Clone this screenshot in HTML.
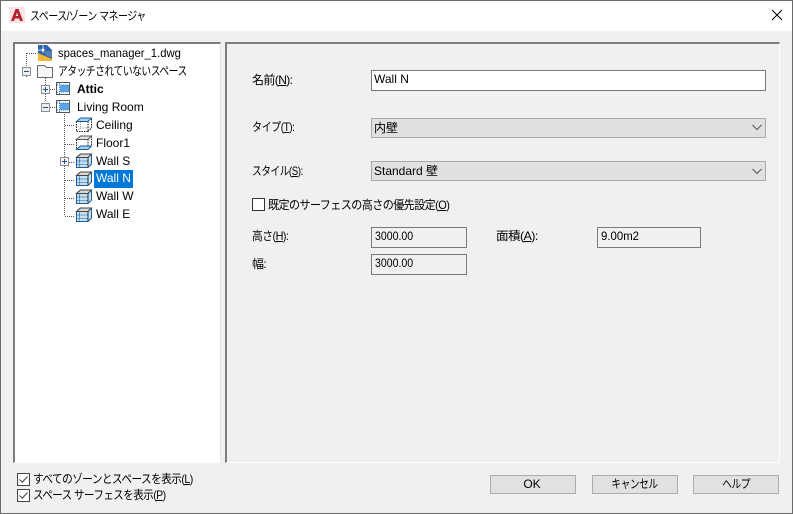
<!DOCTYPE html>
<html><head><meta charset="utf-8">
<style>
html,body{margin:0;padding:0;width:793px;height:514px;overflow:hidden;background:#f0f0f0}
body{position:relative;font-family:"Liberation Sans","Noto Sans CJK JP",sans-serif;font-size:12px;color:#000}
.a{position:absolute;white-space:nowrap;line-height:16px;transform-origin:left center}
.b{position:absolute;box-sizing:border-box}
.jp{letter-spacing:-.6px}
u{text-decoration:underline}
.combo{background:#e0e0e0;border:1px solid #a9a9a9;left:371px;width:395px;height:20px}
.ro{background:#f0f0f0;border:1px solid #7a7a7a;height:21px}
.btn{background:#e1e1e1;border:1px solid #adadad;height:19px;width:86px;top:475px;text-align:center;line-height:16px;font-size:12px}
.btn span{display:inline-block}
.t{font-size:12px;letter-spacing:0}
.chk{width:13px;height:13px;background:#fff;border:1px solid #333}
</style></head><body>
<div class="b" style="left:0;top:0;width:793px;height:514px;border:1px solid #6b6b6b;border-top-color:#6b6b6b"></div>
<div class="b" style="left:1px;top:1px;width:791px;height:30px;background:#fff"></div>
<svg class="b" style="left:9px;top:7px" width="16" height="16" viewBox="0 0 16 16"><rect width="16" height="16" fill="#f8e4e2"/><path d="M2 14 L6.5 2 H9.5 L14 14 H11 L10.2 11.5 H5.8 L5 14 Z M6.8 9 H9.2 L8 5.5 Z" fill="#b5222d" fill-rule="evenodd"/></svg>
<div class="a jp" style="left:30px;top:8px;transform:scaleX(.83)">スペース/ゾーン マネージャ</div>
<svg class="b" style="left:771px;top:9px" width="12" height="12" viewBox="0 0 12 12"><path d="M1 1 L11 11 M11 1 L1 11" stroke="#000" stroke-width="1" fill="none"/></svg>

<!-- left pane -->
<div class="b" style="left:13px;top:42px;width:208px;height:421px;background:#fff;border-top:2px solid #7d7d7d;border-left:2px solid #7d7d7d;border-right:1px solid #e4e4e4;border-bottom:1px solid #fff"></div>
<!-- right pane -->
<div class="b" style="left:225px;top:42px;width:555px;height:421px;background:#f0f0f0;border-top:2px solid #7d7d7d;border-left:2px solid #7d7d7d;border-right:1px solid #fff;border-bottom:1px solid #fff"></div>

<svg class="b" style="left:15px;top:44px" width="205" height="185" viewBox="15 44 205 185" shape-rendering="crispEdges">
<defs>
<g id="room"><rect x="0.5" y="0.5" width="13" height="12" fill="#fff" stroke="#555"/><rect x="4" y="3" width="9" height="7" fill="#5aa5e6"/><path d="M3.5 1V12.5" stroke="#2b80d0" stroke-dasharray="1 1"/><path d="M1 3H13M1 10H13" stroke="#2b80d0" stroke-dasharray="1 1"/></g>
<g id="minus"><rect x="0.5" y="0.5" width="8" height="8" fill="#eee" stroke="#8f8f8f"/><path d="M2 4.5H7" stroke="#1f4f8f"/></g>
<g id="plus"><rect x="0.5" y="0.5" width="8" height="8" fill="#f4f4f4" stroke="#8f8f8f"/><path d="M2 4.5H7M4.5 2V7" stroke="#1f4f8f"/></g>
<g id="wall" shape-rendering="auto"><path d="M0.5 4.5 L4.5 1 H15.5 V11 L12 14.5 H0.5 Z" fill="#c6e0f2" stroke="#1b5e9e" stroke-width="1"/><path d="M3.5 4.5V14.5M0.5 8H12M0.5 11.5H12" stroke="#1b5e9e" stroke-dasharray="1 1"/><path d="M12 4.5 L15.5 1 M12 4.5 V14.5" fill="none" stroke="#333" stroke-width="1"/><path d="M0.5 4.5 L4.5 1 H15.5 L12 4.5 Z" fill="#d5d9de" stroke="#444" stroke-width="1"/></g>
<g id="ceil" shape-rendering="auto"><path d="M0.5 4.5 V14.5 H12 V4.5 M12 14.5 L15.5 11 V1" fill="#fff" stroke="#222" stroke-dasharray="1.5 1"/><path d="M4.5 1V11H15.5M4.5 11L.5 14.5" fill="none" stroke="#999" stroke-dasharray="1 1"/><path d="M0.5 4.5 L4.5 1 H15.5 L12 4.5 Z" fill="#a9d2f0" stroke="#1b5e9e"/></g>
<g id="floor" shape-rendering="auto"><path d="M0.5 4.5 V14.5 M12 4.5 V14.5 M0.5 4.5 H12 M15.5 1 V11" fill="none" stroke="#222" stroke-dasharray="1.5 1"/><path d="M0.5 4.5 L4.5 1 H15.5 L12 4.5 Z" fill="#e0e2e6" stroke="#555"/><path d="M0.5 14.5 L4.5 11 H15.5 L12 14.5 Z" fill="#a9d2f0" stroke="#1b5e9e"/></g>
</defs>
<g stroke="#555" stroke-dasharray="1 1" fill="none">
<path d="M26.5 53V66M27 53.5H37"/>
<path d="M26.5 76V77M45.5 78V102M50 89.5H55M50 107.5H55"/>
<path d="M64.5 112V216M65 125.5H75M65 144.5H75M69 162.5H75M65 180.5H75M65 198.5H75M65 216.5H75"/>
</g>
<!-- dwg -->
<g shape-rendering="auto"><rect x="38" y="45" width="14" height="16" fill="#2c62a8"/><path d="M38 53 L52 59 V61 H38Z" fill="#f2b632"/><path d="M47 45 L52 50 V45Z" fill="#fff"/><path d="M38 50H44M43 45V53" stroke="#bcd6f0"/><circle cx="43" cy="50" r="1.5" fill="#fff"/><path d="M45 51 L52 51 V58 L45 55Z" fill="#5a80b0"/></g>
<!-- folder -->
<path d="M37.5 65.5 H44.5 L46.5 67.5 H52.5 V77.5 H37.5 Z" fill="#f7f7f7" stroke="#6b6b6b"/>
<use href="#minus" x="22" y="67"/>
<use href="#plus" x="41" y="85"/>
<use href="#room" x="56" y="82"/>
<use href="#minus" x="41" y="103"/>
<use href="#room" x="56" y="100"/>
<use href="#ceil" x="76" y="117"/>
<use href="#floor" x="76" y="135"/>
<use href="#plus" x="60" y="157"/>
<use href="#wall" x="76" y="153"/>
<use href="#wall" x="76" y="171"/>
<use href="#wall" x="76" y="189"/>
<use href="#wall" x="76" y="207"/>
</svg>

<div class="a t" style="left:58px;top:45px;transform:scaleX(.94)">spaces_manager_1.dwg</div>
<div class="a jp" style="left:58px;top:63px;transform:scaleX(.816)">アタッチされていないスペース</div>
<div class="a t" style="left:77px;top:81px;font-weight:bold">Attic</div>
<div class="a t" style="left:77px;top:99px">Living Room</div>
<div class="a t" style="left:96px;top:117px">Ceiling</div>
<div class="a t" style="left:96px;top:135px">Floor1</div>
<div class="a t" style="left:96px;top:153px">Wall S</div>
<div class="b" style="left:94px;top:170px;width:39px;height:18px;background:#0078d7"></div>
<div class="a t" style="left:96px;top:170px;color:#fff">Wall N</div>
<div class="a t" style="left:96px;top:188px">Wall W</div>
<div class="a t" style="left:96px;top:206px">Wall E</div>

<!-- form -->
<div class="a jp" style="left:252px;top:72px">名前(<u>N</u>):</div>
<div class="b" style="left:371px;top:70px;width:395px;height:21px;background:#fff;border:1px solid #7a7a7a"></div>
<div class="a" style="left:374px;top:71px">Wall N</div>

<div class="a jp" style="left:252px;top:119px;transform:scaleX(.84)">タイプ(<u>T</u>):</div>
<div class="b combo" style="top:118px"></div>
<div class="a" style="left:374px;top:120px">内壁</div>
<svg class="b" style="left:752px;top:124px" width="10" height="7"><path d="M0.5 1 L5 5.5 L9.5 1" fill="none" stroke="#555" stroke-width="1"/></svg>

<div class="a jp" style="left:252px;top:163px;transform:scaleX(.81)">スタイル(<u>S</u>):</div>
<div class="b combo" style="top:161px"></div>
<div class="a" style="left:374px;top:163px">Standard 壁</div>
<svg class="b" style="left:752px;top:168px" width="10" height="7"><path d="M0.5 1 L5 5.5 L9.5 1" fill="none" stroke="#555" stroke-width="1"/></svg>

<div class="b chk" style="left:252px;top:198px"></div>
<div class="a jp" style="left:268px;top:197px;transform:scaleX(.92)">既定のサーフェスの高さの優先設定(<u>O</u>)</div>

<div class="a jp" style="left:252px;top:228px;transform:scaleX(.9)">高さ(<u>H</u>):</div>
<div class="b ro" style="left:371px;top:227px;width:96px"></div>
<div class="a" style="left:375px;top:228px;transform:scaleX(.88)">3000.00</div>
<div class="a jp" style="left:496px;top:228px;transform:scaleX(1.05)">面積(<u>A</u>):</div>
<div class="b ro" style="left:597px;top:227px;width:104px"></div>
<div class="a" style="left:601px;top:228px;transform:scaleX(.95)">9.00m2</div>
<div class="a jp" style="left:252px;top:256px">幅:</div>
<div class="b ro" style="left:371px;top:254px;width:96px"></div>
<div class="a" style="left:375px;top:255px;transform:scaleX(.88)">3000.00</div>

<!-- bottom -->
<svg class="b" style="left:17px;top:473px" width="13" height="30" shape-rendering="crispEdges">
<rect x=".5" y=".5" width="12" height="12" fill="#fff" stroke="#444"/>
<rect x=".5" y="16.5" width="12" height="12" fill="#fff" stroke="#444"/>
<g shape-rendering="auto" fill="none" stroke="#555" stroke-width="1.2"><path d="M2.5 6.5 L5.2 9.2 L10.5 3.5"/><path d="M2.5 22.5 L5.2 25.2 L10.5 19.5"/></g>
</svg>
<div class="a jp" style="left:33px;top:471px;transform:scaleX(.885)">すべてのゾーンとスペースを表示(<u>L</u>)</div>
<div class="a jp" style="left:33px;top:487px;transform:scaleX(.875)">スペース サーフェスを表示(<u>P</u>)</div>

<div class="b btn" style="left:490px"><span style="transform:translateX(-1px)">OK</span></div>
<div class="b btn jp" style="left:592px"><span style="transform:scaleX(.81)">キャンセル</span></div>
<div class="b btn jp" style="left:693px"><span style="transform:scaleX(.82)">ヘルプ</span></div>
</body></html>
